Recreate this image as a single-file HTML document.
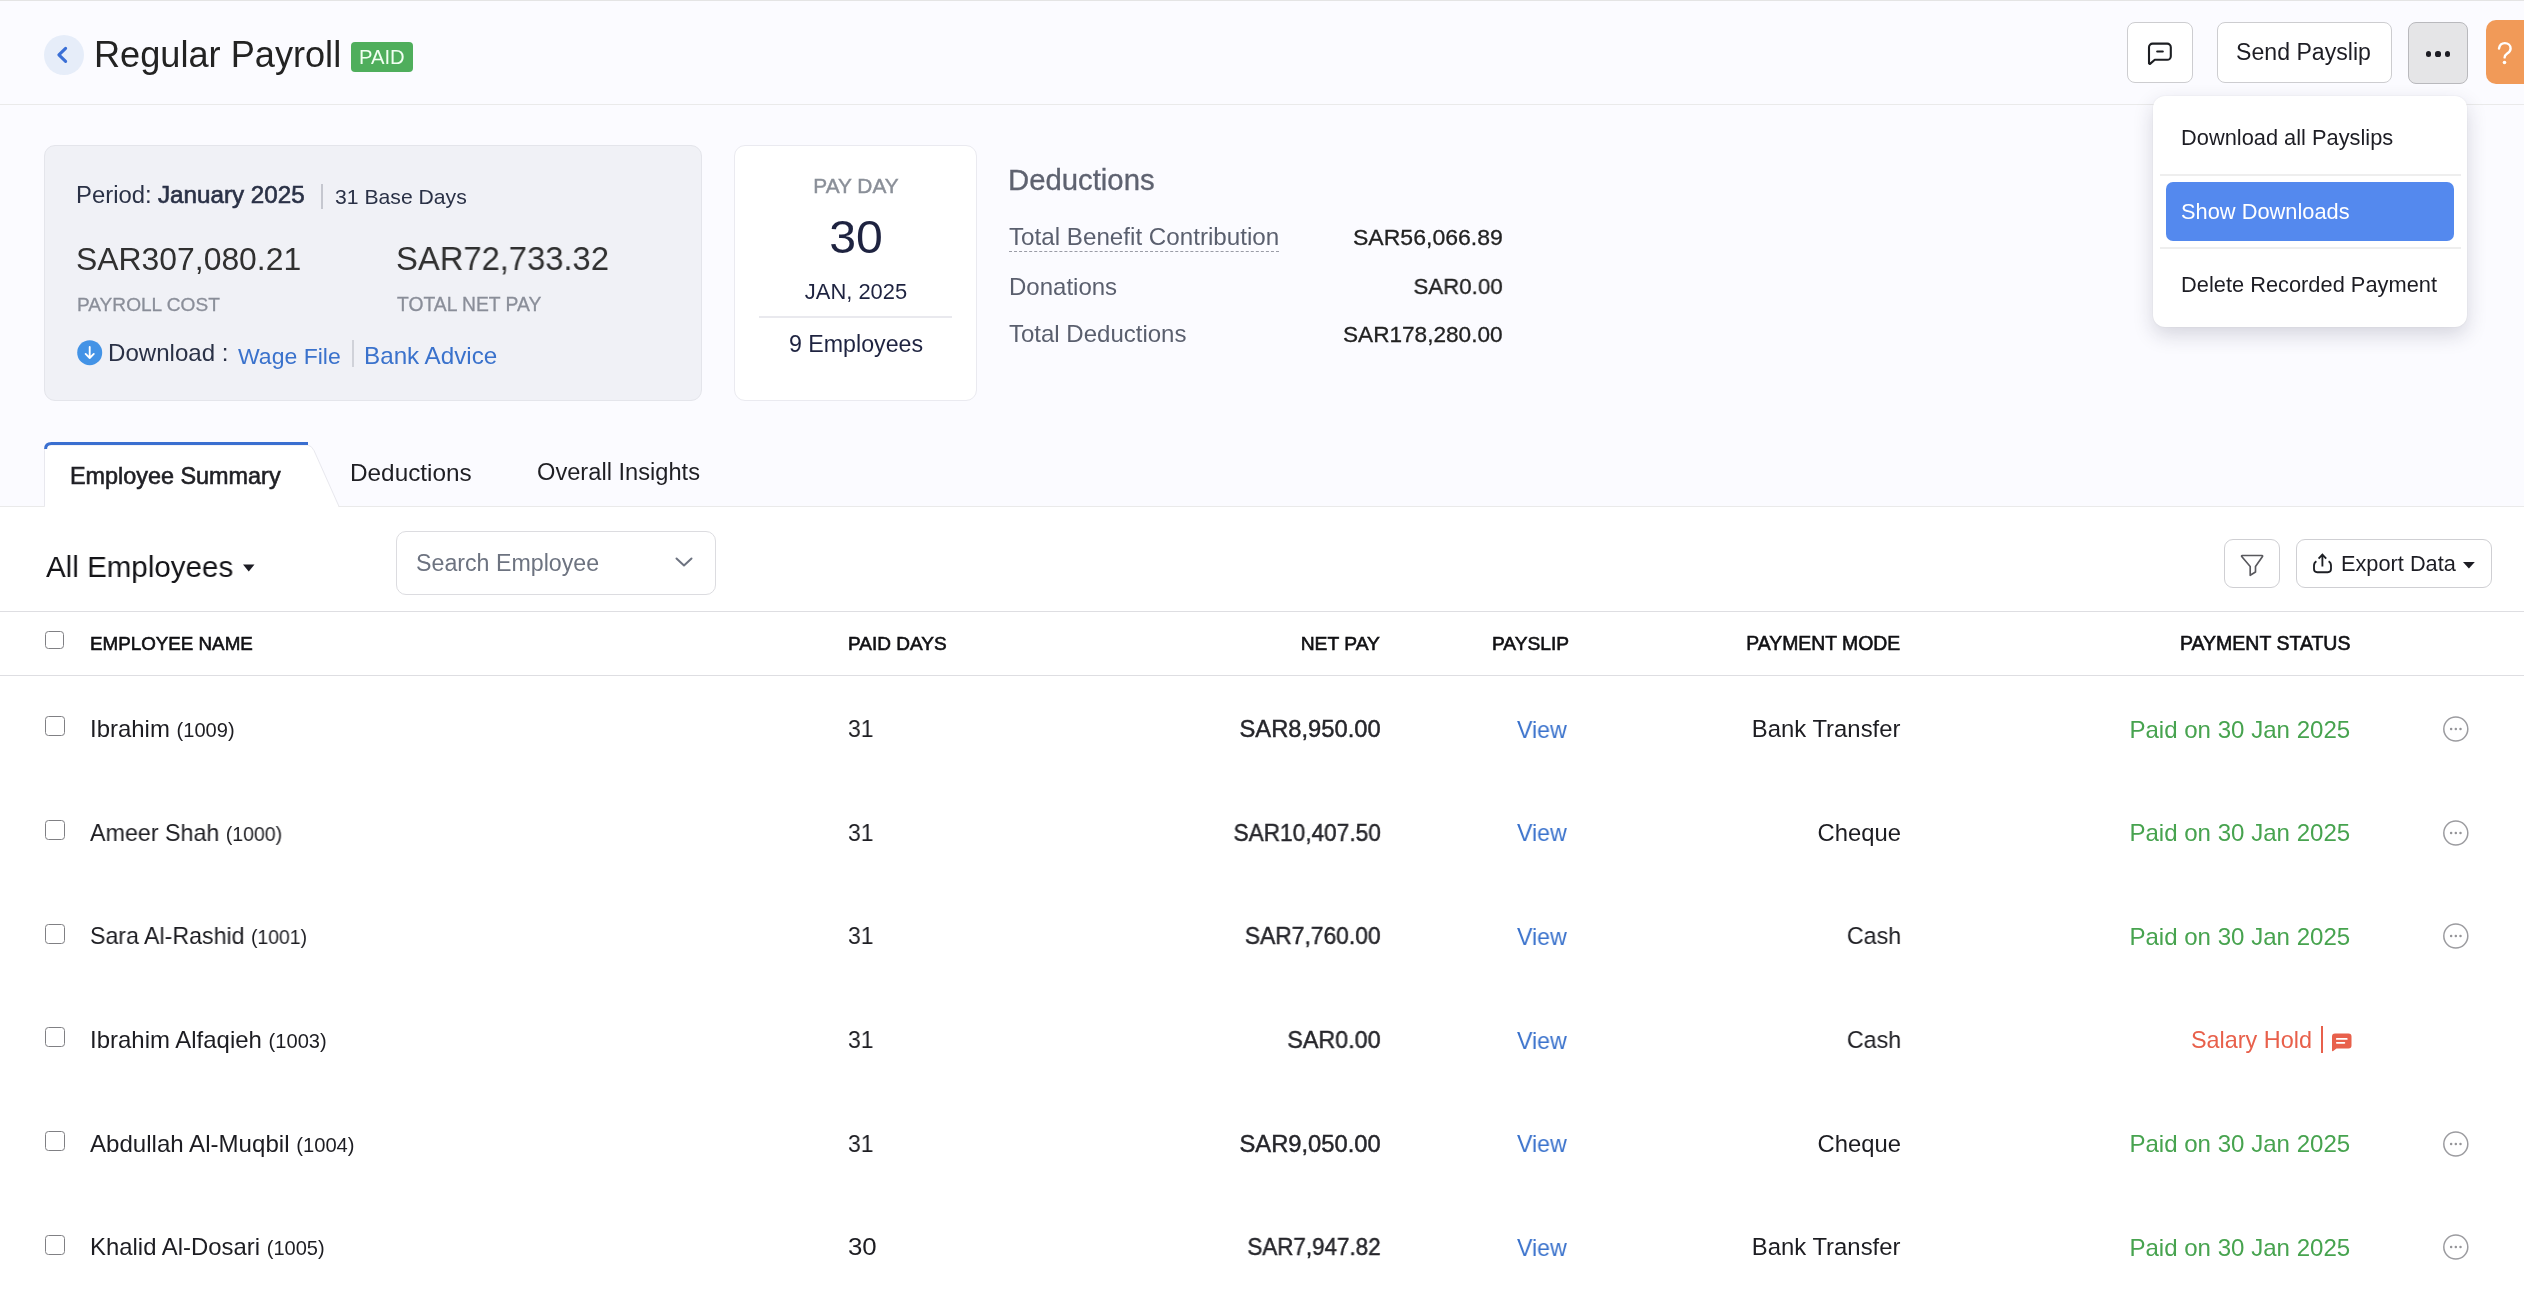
<!DOCTYPE html>
<html><head><meta charset="utf-8"><title>Regular Payroll</title>
<style>
html,body{margin:0;padding:0;}
body{width:2524px;height:1300px;position:relative;overflow:hidden;background:#fff;font-family:"Liberation Sans",sans-serif;}
.b{position:absolute;}
.t{position:absolute;line-height:1;white-space:nowrap;will-change:transform;}
.med{-webkit-text-stroke:0.45px currentColor;}
.hdr{-webkit-text-stroke:0.6px currentColor;}
.med2{-webkit-text-stroke:0.3px currentColor;}
.semi{-webkit-text-stroke:0.6px currentColor;}
</style></head><body>
<div class="b" style="left:0px;top:0px;width:2524px;height:506px;background:#fbfbff;"></div>
<div class="b" style="left:0px;top:0px;width:2524px;height:1px;background:#e4e4e4;"></div>
<div class="b" style="left:0px;top:104px;width:2524px;height:1px;background:#eaeaea;"></div>
<div class="b" style="left:0px;top:506px;width:2524px;height:794px;background:#ffffff;"></div>
<div class="b" style="left:0px;top:506px;width:2524px;height:1px;background:#eaeaea;"></div>
<div class="b" style="left:44px;top:35px;width:40px;height:40px;background:#e6edf9;border-radius:50%;"></div>
<svg class="b" style="left:54px;top:43px" width="20" height="24" viewBox="0 0 20 24"><path d="M11.6 5.4 L4.9 11.9 L11.6 18.4" fill="none" stroke="#3a6fd6" stroke-width="3.1" stroke-linecap="round" stroke-linejoin="round"/></svg>
<div id="t1" class="t " style="left:94.0px;top:37.2px;font-size:36.1px;color:#232323;transform:scaleX(1.0021);transform-origin:left;">Regular Payroll</div>
<div class="b" style="left:351px;top:42px;width:62px;height:30px;background:#4fae5c;border-radius:4px;"></div>
<div id="t2" class="t " style="left:358.5px;top:47.5px;font-size:19.4px;color:#f2fff2;transform:scaleX(1.0429);transform-origin:left;">PAID</div>
<div class="b" style="left:2127px;top:22px;width:66px;height:61px;background:#fff;border:1px solid #cdcdd0;border-radius:8px;box-sizing:border-box;"></div>
<svg class="b" style="left:2145px;top:41px" width="28" height="26" viewBox="0 0 28 26"><path d="M4 21.6 V6.2 a3.6 3.6 0 0 1 3.6 -3.6 H22.2 a3.6 3.6 0 0 1 3.6 3.6 V15.2 a3.6 3.6 0 0 1 -3.6 3.6 H9.8 L5.6 22.4 a0.9 0.9 0 0 1 -1.6 -0.8 Z" fill="none" stroke="#1c1e22" stroke-width="2.1" stroke-linejoin="round"/><path d="M12.2 10.5 H17.8" stroke="#1c1e22" stroke-width="2.1" stroke-linecap="round"/></svg>
<div class="b" style="left:2217px;top:22px;width:175px;height:61px;background:#fff;border:1px solid #cdcdd0;border-radius:8px;box-sizing:border-box;"></div>
<div id="t3" class="t " style="left:2236.3px;top:40.7px;font-size:23.0px;color:#1d1d24;transform:scaleX(1.0053);transform-origin:left;">Send Payslip</div>
<div class="b" style="left:2408px;top:22px;width:60px;height:62px;background:#e5e5e7;border:1px solid #b9b9bd;border-radius:8px;box-sizing:border-box;"></div>
<div class="b" style="left:2425.9px;top:51.4px;width:5.199999999999818px;height:5.200000000000003px;background:#1d1d24;border-radius:50%;"></div>
<div class="b" style="left:2435.4px;top:51.4px;width:5.199999999999818px;height:5.200000000000003px;background:#1d1d24;border-radius:50%;"></div>
<div class="b" style="left:2444.9px;top:51.4px;width:5.199999999999818px;height:5.200000000000003px;background:#1d1d24;border-radius:50%;"></div>
<div class="b" style="left:2486px;top:20px;width:74px;height:64px;background:#f19a58;border-radius:10px;"></div>
<svg class="b" style="left:2490px;top:38px" width="28" height="30" viewBox="0 0 28 30"><path d="M9 10.5 C9.6 7.1 12 5.1 14.8 5.1 C18 5.1 20.6 7.4 20.6 10.4 C20.6 12.9 19 14.2 17.2 15.4 C15.6 16.5 14.6 17.5 14.6 19.4" fill="none" stroke="#fff" stroke-width="2.4" stroke-linecap="round"/><circle cx="14.5" cy="24.5" r="1.8" fill="#fff"/></svg>
<div class="b" style="left:44px;top:145px;width:658px;height:256px;background:#f0f1f6;border:1px solid #e4e5eb;border-radius:11px;box-sizing:border-box;"></div>
<div id="t4" class="t " style="left:75.7px;top:184.3px;font-size:23px;color:#2a3146;transform:scaleX(1.0377);transform-origin:left;">Period:</div>
<div id="t5" class="t semi" style="left:158.3px;top:184.3px;font-size:23px;color:#2a3146;transform:scaleX(1.0518);transform-origin:left;">January 2025</div>
<div class="b" style="left:321px;top:184px;width:1.5px;height:25px;background:#c5c7cf;"></div>
<div id="t6" class="t " style="left:334.5px;top:186.0px;font-size:21px;color:#2a3146;transform:scaleX(1.0078);transform-origin:left;">31 Base Days</div>
<div id="t7" class="t " style="left:76.3px;top:244.2px;font-size:31.9px;color:#303030;">SAR307,080.21</div>
<div id="t8" class="t " style="left:396.3px;top:243.3px;font-size:32.9px;color:#303030;transform:scaleX(0.9953);transform-origin:left;">SAR72,733.32</div>
<div id="t9" class="t med2" style="left:77.0px;top:294.7px;font-size:19px;color:#8a8e99;transform:scaleX(1.0043);transform-origin:left;">PAYROLL COST</div>
<div id="t10" class="t med2" style="left:396.8px;top:294.5px;font-size:19.3px;color:#8a8e99;">TOTAL NET PAY</div>
<svg class="b" style="left:77px;top:340px" width="26" height="26" viewBox="0 0 26 26"><circle cx="12.7" cy="12.7" r="12.5" fill="#4393e6"/><path d="M12.7 7 V18 M8.6 13.9 L12.7 18 L16.8 13.9" fill="none" stroke="#fff" stroke-width="1.85" stroke-linecap="round" stroke-linejoin="round"/></svg>
<div id="t11" class="t " style="left:108.0px;top:342.3px;font-size:23.6px;color:#2a3146;transform:scaleX(1.0202);transform-origin:left;">Download :</div>
<div id="t12" class="t " style="left:238.2px;top:344.6px;font-size:22.9px;color:#3a72cc;transform:scaleX(1.0050);transform-origin:left;">Wage File</div>
<div class="b" style="left:352px;top:340px;width:1.5px;height:26.5px;background:#d0d2d9;"></div>
<div id="t13" class="t " style="left:364.3px;top:343.7px;font-size:24.0px;color:#3a72cc;transform:scaleX(1.0093);transform-origin:left;">Bank Advice</div>
<div class="b" style="left:734px;top:145px;width:243px;height:256px;background:#ffffff;border:1px solid #eaeaf0;border-radius:11px;box-sizing:border-box;"></div>
<div id="t14" class="t med" style="left:355.5px;width:1000px;text-align:center;top:176.4px;font-size:20.5px;color:#8a8f98;transform:scaleX(1.0157);transform-origin:center;">PAY DAY</div>
<div id="t15" class="t " style="left:355.5px;width:1000px;text-align:center;top:215.0px;font-size:45.5px;color:#1e2340;transform:scaleX(1.0583);transform-origin:center;">30</div>
<div id="t16" class="t " style="left:355.5px;width:1000px;text-align:center;top:280.5px;font-size:21.8px;color:#1e2340;transform:scaleX(1.0059);transform-origin:center;">JAN, 2025</div>
<div class="b" style="left:759px;top:316px;width:193px;height:2px;background:#e9e9ee;"></div>
<div id="t17" class="t " style="left:355.5px;width:1000px;text-align:center;top:332.5px;font-size:23px;color:#1e2340;transform:scaleX(1.0091);transform-origin:center;">9 Employees</div>
<div id="t18" class="t med2" style="left:1008.0px;top:165.6px;font-size:28.6px;color:#5e6270;transform:scaleX(1.0250);transform-origin:left;">Deductions</div>
<div id="t19" class="t " style="left:1009.3px;top:225.3px;font-size:24.2px;color:#5a5f6e;">Total Benefit Contribution</div>
<div class="b" style="left:1009px;top:250.5px;width:270px;height:0;border-top:1.5px dashed #9a9ca6"></div>
<div id="t20" class="t med2" style="right:1021.2px;top:226.4px;font-size:22.9px;color:#222;transform:scaleX(1.0068);transform-origin:right;">SAR56,066.89</div>
<div id="t21" class="t " style="left:1008.5px;top:274.5px;font-size:24px;color:#5a5f6e;">Donations</div>
<div id="t22" class="t med2" style="right:1021.0px;top:275.4px;font-size:22.9px;color:#222;transform:scaleX(0.9733);transform-origin:right;">SAR0.00</div>
<div id="t23" class="t " style="left:1008.5px;top:322.3px;font-size:24px;color:#5a5f6e;transform:scaleX(0.9972);transform-origin:left;">Total Deductions</div>
<div id="t24" class="t med2" style="right:1021.0px;top:323.5px;font-size:22.6px;color:#222;">SAR178,280.00</div>
<div class="b" style="left:2153px;top:96px;width:314px;height:231px;background:#fff;border-radius:12px;box-shadow:0 8px 20px rgba(30,30,60,0.17),0 0 2px rgba(0,0,0,0.07);"></div>
<div class="b" style="left:2160px;top:174px;width:301px;height:2px;background:#eeeeee;"></div>
<div class="b" style="left:2160px;top:247px;width:301px;height:2px;background:#eeeeee;"></div>
<div class="b" style="left:2166px;top:182px;width:288px;height:59px;background:#5489ee;border-radius:7px;"></div>
<div id="t25" class="t " style="left:2181.0px;top:127.4px;font-size:21.7px;color:#1d1d24;transform:scaleX(1.0062);transform-origin:left;">Download all Payslips</div>
<div id="t26" class="t " style="left:2181.0px;top:200.6px;font-size:21.7px;color:#ffffff;transform:scaleX(1.0060);transform-origin:left;">Show Downloads</div>
<div id="t27" class="t " style="left:2181.0px;top:273.5px;font-size:21.7px;color:#1d1d24;transform:scaleX(1.0063);transform-origin:left;">Delete Recorded Payment</div>
<svg class="b" style="left:40px;top:438px" width="310" height="72" viewBox="0 0 310 72"><path d="M4.5 68.5 V12.5 Q4.5 7 10 7 H267.5 Q271.5 7.5 274 12.5 L299 68.5" fill="#ffffff" stroke="#e8e8ee" stroke-width="1"/><path d="M5.6 11 Q5.6 5.5 11.5 5.5 H268" fill="none" stroke="#3a6fd0" stroke-width="3"/></svg>
<div class="b" style="left:45px;top:505px;width:293px;height:3px;background:#fff;"></div>
<div id="t28" class="t hdr" style="left:70.3px;top:465.1px;font-size:23.4px;color:#1f1f24;">Employee Summary</div>
<div id="t29" class="t " style="left:349.5px;top:460.6px;font-size:24px;color:#1f1f24;transform:scaleX(1.0137);transform-origin:left;">Deductions</div>
<div id="t30" class="t " style="left:536.5px;top:461.0px;font-size:23.5px;color:#1f1f24;transform:scaleX(1.0063);transform-origin:left;">Overall Insights</div>
<div id="t31" class="t " style="left:45.5px;top:552.2px;font-size:29.8px;color:#141418;transform:scaleX(0.9915);transform-origin:left;">All Employees</div>
<svg class="b" style="left:242px;top:563px" width="14" height="10" viewBox="0 0 14 10"><path d="M1 1.5 H12.5 L6.75 8.5 Z" fill="#1d1d24"/></svg>
<div class="b" style="left:396px;top:531px;width:320px;height:64px;background:#fff;border:1px solid #dcdce0;border-radius:10px;box-sizing:border-box;"></div>
<div id="t32" class="t " style="left:415.5px;top:551.8px;font-size:23px;color:#6d7380;transform:scaleX(1.0089);transform-origin:left;">Search Employee</div>
<svg class="b" style="left:673px;top:554px" width="22" height="16" viewBox="0 0 22 16"><path d="M3.5 4.5 L11 11.5 L18.5 4.5" fill="none" stroke="#6d7380" stroke-width="2" stroke-linecap="round" stroke-linejoin="round"/></svg>
<div class="b" style="left:2224px;top:539px;width:56px;height:49px;background:#fff;border:1px solid #cfcfd3;border-radius:9px;box-sizing:border-box;"></div>
<svg class="b" style="left:2238px;top:551px" width="28" height="28" viewBox="0 0 28 28"><path d="M4.2 4.5 H24 a0.6 0.6 0 0 1 0.5 1 L17.5 15.5 V21 L12.2 24.3 V15.5 L3.7 5.5 a0.6 0.6 0 0 1 0.5 -1 Z" fill="none" stroke="#58585d" stroke-width="1.65" stroke-linejoin="round"/></svg>
<div class="b" style="left:2296px;top:539px;width:196px;height:49px;background:#fff;border:1px solid #cfcfd3;border-radius:9px;box-sizing:border-box;"></div>
<svg class="b" style="left:2310px;top:551px" width="24" height="24" viewBox="0 0 24 24"><path d="M6.4 10.3 Q4 11.6 4 14.6 V18 Q4 21.2 7.2 21.2 H17.8 Q21 21.2 21 18 V14.6 Q21 11.6 18.6 10.3" fill="none" stroke="#1d1f24" stroke-width="1.85" stroke-linecap="butt"/><path d="M12.4 15.6 V3.8 M8.6 7.6 L12.4 3.6 L16.2 7.6" fill="none" stroke="#1d1f24" stroke-width="1.85" stroke-linecap="butt" stroke-linejoin="miter"/></svg>
<div id="t33" class="t " style="left:2340.5px;top:552.6px;font-size:21.7px;color:#1d1d24;transform:scaleX(1.0026);transform-origin:left;">Export Data</div>
<svg class="b" style="left:2461px;top:560px" width="16" height="10" viewBox="0 0 16 10"><path d="M2 2 H13.8 L7.9 8.4 Z" fill="#1d1d24"/></svg>
<div class="b" style="left:0px;top:611px;width:2524px;height:1px;background:#dedee2;"></div>
<div class="b" style="left:0px;top:675px;width:2524px;height:1px;background:#dedee2;"></div>
<div class="b" style="left:45px;top:630.5px;width:18.5px;height:18.5px;border:1.6px solid #808084;border-radius:3.5px;box-sizing:border-box;background:#fff;"></div>
<div id="t34" class="t hdr" style="left:90.0px;top:634.8px;font-size:18.8px;color:#111114;">EMPLOYEE NAME</div>
<div id="t35" class="t hdr" style="left:848.0px;top:634.7px;font-size:18.9px;color:#111114;transform:scaleX(1.0062);transform-origin:left;">PAID DAYS</div>
<div id="t36" class="t hdr" style="right:1144.2px;top:634.4px;font-size:19.2px;color:#111114;transform:scaleX(1.0038);transform-origin:right;">NET PAY</div>
<div id="t37" class="t hdr" style="left:1492.0px;top:634.7px;font-size:18.9px;color:#111114;transform:scaleX(1.0149);transform-origin:left;">PAYSLIP</div>
<div id="t38" class="t hdr" style="right:623.5px;top:634.4px;font-size:19.3px;color:#111114;transform:scaleX(1.0046);transform-origin:right;">PAYMENT MODE</div>
<div id="t39" class="t hdr" style="right:173.5px;top:634.2px;font-size:19.5px;color:#111114;">PAYMENT STATUS</div>
<div class="b" style="left:44.5px;top:716.3px;width:20.0px;height:20.0px;border:1.6px solid #808084;border-radius:3.5px;box-sizing:border-box;background:#fff;"></div>
<div id="t40" class="t " style="left:90.4px;top:717.9px;font-size:23.6px;color:#1d1d22;transform:scaleX(1.0151);transform-origin:left;">Ibrahim <span style="font-size:19.8px">(1009)</span></div>
<div id="t41" class="t " style="left:848.0px;top:718.1px;font-size:23.4px;color:#1d1d22;transform:scaleX(0.9792);transform-origin:left;">31</div>
<div id="t42" class="t med" style="right:1143.7px;top:717.9px;font-size:23.65px;color:#26262b;transform:scaleX(1.0036);transform-origin:right;">SAR8,950.00</div>
<div id="t43" class="t " style="left:1517.0px;top:718.7px;font-size:23.6px;color:#3a72cc;transform:scaleX(0.9804);transform-origin:left;">View</div>
<div id="t44" class="t " style="right:623.2px;top:717.8px;font-size:23.7px;color:#1d1d22;transform:scaleX(1.0083);transform-origin:right;">Bank Transfer</div>
<div id="t45" class="t " style="right:173.5px;top:717.6px;font-size:24.0px;color:#47a34f;transform:scaleX(1.0028);transform-origin:right;">Paid on 30 Jan 2025</div>
<svg class="b" style="left:2441px;top:713.8px" width="30" height="30" viewBox="0 0 30 30"><circle cx="14.8" cy="15" r="12" fill="none" stroke="#9c9ca0" stroke-width="1.5"/><circle cx="10.1" cy="15" r="1.25" fill="#949498"/><circle cx="14.8" cy="15" r="1.25" fill="#949498"/><circle cx="19.5" cy="15" r="1.25" fill="#949498"/></svg>
<div class="b" style="left:44.5px;top:820.0px;width:20.0px;height:20.0px;border:1.6px solid #808084;border-radius:3.5px;box-sizing:border-box;background:#fff;"></div>
<div id="t46" class="t " style="left:90.4px;top:821.6px;font-size:23.6px;color:#1d1d22;transform:scaleX(0.9861);transform-origin:left;">Ameer Shah <span style="font-size:19.8px">(1000)</span></div>
<div id="t47" class="t " style="left:848.0px;top:821.7px;font-size:23.4px;color:#1d1d22;transform:scaleX(0.9792);transform-origin:left;">31</div>
<div id="t48" class="t med" style="right:1143.7px;top:821.5px;font-size:23.65px;color:#26262b;transform:scaleX(0.9575);transform-origin:right;">SAR10,407.50</div>
<div id="t49" class="t " style="left:1517.0px;top:822.4px;font-size:23.6px;color:#3a72cc;transform:scaleX(0.9804);transform-origin:left;">View</div>
<div id="t50" class="t " style="right:623.2px;top:821.5px;font-size:23.7px;color:#1d1d22;transform:scaleX(1.0049);transform-origin:right;">Cheque</div>
<div id="t51" class="t " style="right:173.5px;top:821.2px;font-size:24.0px;color:#47a34f;transform:scaleX(1.0028);transform-origin:right;">Paid on 30 Jan 2025</div>
<svg class="b" style="left:2441px;top:817.5px" width="30" height="30" viewBox="0 0 30 30"><circle cx="14.8" cy="15" r="12" fill="none" stroke="#9c9ca0" stroke-width="1.5"/><circle cx="10.1" cy="15" r="1.25" fill="#949498"/><circle cx="14.8" cy="15" r="1.25" fill="#949498"/><circle cx="19.5" cy="15" r="1.25" fill="#949498"/></svg>
<div class="b" style="left:44.5px;top:923.6999999999999px;width:20.0px;height:20.0px;border:1.6px solid #808084;border-radius:3.5px;box-sizing:border-box;background:#fff;"></div>
<div id="t52" class="t " style="left:90.4px;top:925.2px;font-size:23.6px;color:#1d1d22;transform:scaleX(0.9817);transform-origin:left;">Sara Al-Rashid <span style="font-size:19.8px">(1001)</span></div>
<div id="t53" class="t " style="left:848.0px;top:925.4px;font-size:23.4px;color:#1d1d22;transform:scaleX(0.9792);transform-origin:left;">31</div>
<div id="t54" class="t med" style="right:1143.7px;top:925.2px;font-size:23.65px;color:#26262b;transform:scaleX(0.9655);transform-origin:right;">SAR7,760.00</div>
<div id="t55" class="t " style="left:1517.0px;top:926.0px;font-size:23.6px;color:#3a72cc;transform:scaleX(0.9804);transform-origin:left;">View</div>
<div id="t56" class="t " style="right:623.2px;top:925.2px;font-size:23.7px;color:#1d1d22;transform:scaleX(0.9849);transform-origin:right;">Cash</div>
<div id="t57" class="t " style="right:173.5px;top:924.9px;font-size:24.0px;color:#47a34f;transform:scaleX(1.0028);transform-origin:right;">Paid on 30 Jan 2025</div>
<svg class="b" style="left:2441px;top:921.2px" width="30" height="30" viewBox="0 0 30 30"><circle cx="14.8" cy="15" r="12" fill="none" stroke="#9c9ca0" stroke-width="1.5"/><circle cx="10.1" cy="15" r="1.25" fill="#949498"/><circle cx="14.8" cy="15" r="1.25" fill="#949498"/><circle cx="19.5" cy="15" r="1.25" fill="#949498"/></svg>
<div class="b" style="left:44.5px;top:1027.4px;width:20.0px;height:20.0px;border:1.6px solid #808084;border-radius:3.5px;box-sizing:border-box;background:#fff;"></div>
<div id="t58" class="t " style="left:90.4px;top:1028.9px;font-size:23.6px;color:#1d1d22;transform:scaleX(1.0161);transform-origin:left;">Ibrahim Alfaqieh <span style="font-size:19.8px">(1003)</span></div>
<div id="t59" class="t " style="left:848.0px;top:1029.1px;font-size:23.4px;color:#1d1d22;transform:scaleX(0.9792);transform-origin:left;">31</div>
<div id="t60" class="t med" style="right:1143.7px;top:1028.9px;font-size:23.65px;color:#26262b;transform:scaleX(0.9860);transform-origin:right;">SAR0.00</div>
<div id="t61" class="t " style="left:1517.0px;top:1029.7px;font-size:23.6px;color:#3a72cc;transform:scaleX(0.9804);transform-origin:left;">View</div>
<div id="t62" class="t " style="right:623.2px;top:1028.8px;font-size:23.7px;color:#1d1d22;transform:scaleX(0.9849);transform-origin:right;">Cash</div>
<div id="t63" class="t " style="right:212.5px;top:1029.1px;font-size:23.4px;color:#e8604b;">Salary Hold</div>
<div class="b" style="left:2321px;top:1026px;width:2px;height:27px;background:#e8604b;"></div>
<svg class="b" style="left:2331px;top:1032.4px" width="22" height="22" viewBox="0 0 22 22"><path d="M1 18.5 V4.5 a3 3 0 0 1 3 -3 H17.5 a3 3 0 0 1 3 3 V13.5 a3 3 0 0 1 -3 3 H5.5 L2.2 19 a0.8 0.8 0 0 1 -1.2 -0.5 Z" fill="#e8604b"/><path d="M5.8 6.9 H15.8 M5.8 10.8 H13.4" stroke="#fff" stroke-width="1.7" stroke-linecap="round"/></svg>
<div class="b" style="left:44.5px;top:1131.1px;width:20.0px;height:20.0px;border:1.6px solid #808084;border-radius:3.5px;box-sizing:border-box;background:#fff;"></div>
<div id="t64" class="t " style="left:90.4px;top:1132.6px;font-size:23.6px;color:#1d1d22;transform:scaleX(1.0209);transform-origin:left;">Abdullah Al-Muqbil <span style="font-size:19.8px">(1004)</span></div>
<div id="t65" class="t " style="left:848.0px;top:1132.7px;font-size:23.4px;color:#1d1d22;transform:scaleX(0.9792);transform-origin:left;">31</div>
<div id="t66" class="t med" style="right:1143.7px;top:1132.5px;font-size:23.65px;color:#26262b;transform:scaleX(1.0036);transform-origin:right;">SAR9,050.00</div>
<div id="t67" class="t " style="left:1517.0px;top:1133.4px;font-size:23.6px;color:#3a72cc;transform:scaleX(0.9804);transform-origin:left;">View</div>
<div id="t68" class="t " style="right:623.2px;top:1132.5px;font-size:23.7px;color:#1d1d22;transform:scaleX(1.0049);transform-origin:right;">Cheque</div>
<div id="t69" class="t " style="right:173.5px;top:1132.2px;font-size:24.0px;color:#47a34f;transform:scaleX(1.0028);transform-origin:right;">Paid on 30 Jan 2025</div>
<svg class="b" style="left:2441px;top:1128.6px" width="30" height="30" viewBox="0 0 30 30"><circle cx="14.8" cy="15" r="12" fill="none" stroke="#9c9ca0" stroke-width="1.5"/><circle cx="10.1" cy="15" r="1.25" fill="#949498"/><circle cx="14.8" cy="15" r="1.25" fill="#949498"/><circle cx="19.5" cy="15" r="1.25" fill="#949498"/></svg>
<div class="b" style="left:44.5px;top:1234.8px;width:20.0px;height:20.0px;border:1.6px solid #808084;border-radius:3.5px;box-sizing:border-box;background:#fff;"></div>
<div id="t70" class="t " style="left:90.4px;top:1236.2px;font-size:23.6px;color:#1d1d22;transform:scaleX(1.0131);transform-origin:left;">Khalid Al-Dosari <span style="font-size:19.8px">(1005)</span></div>
<div id="t71" class="t " style="left:848.0px;top:1236.4px;font-size:23.4px;color:#1d1d22;transform:scaleX(1.1042);transform-origin:left;">30</div>
<div id="t72" class="t med" style="right:1143.7px;top:1236.2px;font-size:23.65px;color:#26262b;transform:scaleX(0.9475);transform-origin:right;">SAR7,947.82</div>
<div id="t73" class="t " style="left:1517.0px;top:1237.0px;font-size:23.6px;color:#3a72cc;transform:scaleX(0.9804);transform-origin:left;">View</div>
<div id="t74" class="t " style="right:623.2px;top:1236.1px;font-size:23.7px;color:#1d1d22;transform:scaleX(1.0083);transform-origin:right;">Bank Transfer</div>
<div id="t75" class="t " style="right:173.5px;top:1235.9px;font-size:24.0px;color:#47a34f;transform:scaleX(1.0028);transform-origin:right;">Paid on 30 Jan 2025</div>
<svg class="b" style="left:2441px;top:1232.3px" width="30" height="30" viewBox="0 0 30 30"><circle cx="14.8" cy="15" r="12" fill="none" stroke="#9c9ca0" stroke-width="1.5"/><circle cx="10.1" cy="15" r="1.25" fill="#949498"/><circle cx="14.8" cy="15" r="1.25" fill="#949498"/><circle cx="19.5" cy="15" r="1.25" fill="#949498"/></svg>
</body></html>
